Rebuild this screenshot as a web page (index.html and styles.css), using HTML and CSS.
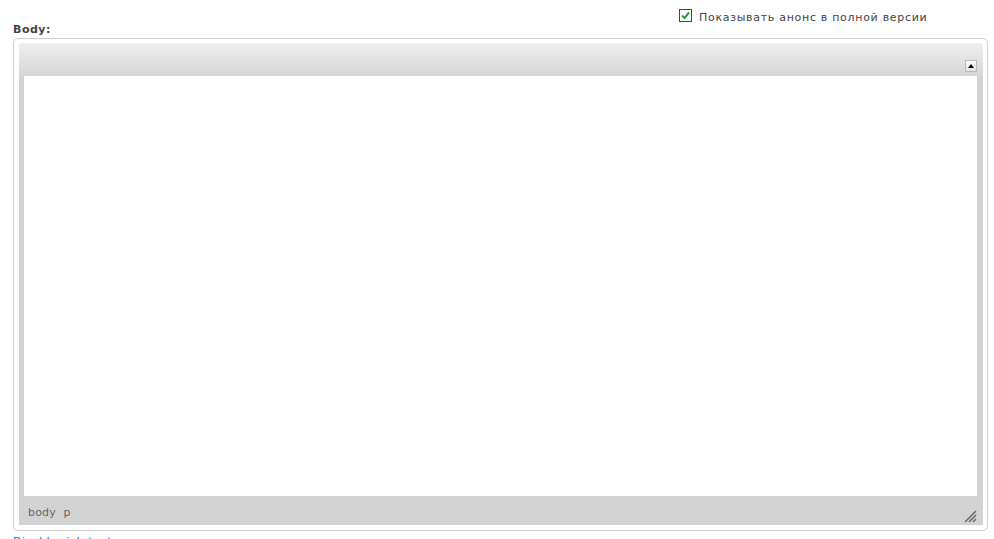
FILE: index.html
```html
<!DOCTYPE html>
<html>
<head>
<meta charset="utf-8">
<link rel="stylesheet" href="styles.css">
</head>
<body>
<div class="page">
  <div class="opt">
    <span class="check"><svg width="9" height="9" viewBox="0 0 9 9"><path d="M1 4.5 L3.5 7 L8 1.5" fill="none" stroke="#2a9d2a" stroke-width="2"/></svg></span>
    <span class="opt-text">Показывать анонс в полной версии</span>
  </div>
  <div class="label">Body:</div>
  <div class="box">
    <div class="editor">
      <div class="toolbar"><span class="collapse"><svg width="6" height="4" viewBox="0 0 6 4"><path d="M0 4 L3 0 L6 4 Z" fill="#000"/></svg></span></div>
      <div class="content"></div>
      <div class="status">
        <span class="path">body&nbsp;&nbsp;p</span>
        <svg class="grip" width="14" height="14" viewBox="0 0 14 14"><path d="M2 13 L13 2 M6 13 L13 6 M10 13 L13 10" stroke="#666" stroke-width="1.5" fill="none"/></svg>
      </div>
    </div>
  </div>
  <a class="toggle" href="#">Disable rich-text</a>
</div>
</body>
</html>
```
FILE: styles.css
```css
html, body { margin: 0; padding: 0; background: #fff; }
body { font-family: "DejaVu Sans", Verdana, sans-serif; font-size: 11px; color: #333; }
.page { padding: 0 6px 0 13px; }
.opt { display: flex; align-items: flex-start; padding: 9px 0 0 666px; height: 13px; }
.check { width: 11px; height: 11px; border: 1px solid #1c4f7a; display: flex; align-items: center; justify-content: center; background: #fff; }
.opt-text { margin-left: 7px; color: #444; font-size: 11px; letter-spacing: 0.7px; line-height: 13px; padding-top: 2px; }
.label { font-weight: bold; color: #444; height: 16px; line-height: 16px; letter-spacing: 0.5px; }
.box { box-sizing: border-box; height: 493px; width: 975px; border: 1px solid #d0d0d0; border-radius: 5px; padding: 4px 4px 4px 5px; }
.editor { height: 482px; background: #d3d3d3; border-radius: 4px 4px 0 0; display: flex; flex-direction: column; }
.toolbar { height: 33px; background: linear-gradient(#efefef, #d6d6d6); border-radius: 4px 4px 0 0; position: relative; }
.collapse { position: absolute; right: 6px; top: 17px; width: 10px; height: 10px; border: 1px solid #bbb; background: linear-gradient(#fafafa, #e4e4e4); display: flex; align-items: center; justify-content: center; }
.content { flex: 1; background: #fff; margin: 0 6px 0 5px; }
.status { height: 29px; display: flex; align-items: center; justify-content: space-between; padding: 0 6px 0 9px; }
.path { color: #666; font-size: 11px; padding-top: 3px; letter-spacing: 0.2px; }
.grip { margin-top: 10px; }
.toggle { display: block; margin-top: 4px; color: #027ac6; text-decoration: none; font-size: 11px; line-height: 13px; letter-spacing: 0.5px; }
```
